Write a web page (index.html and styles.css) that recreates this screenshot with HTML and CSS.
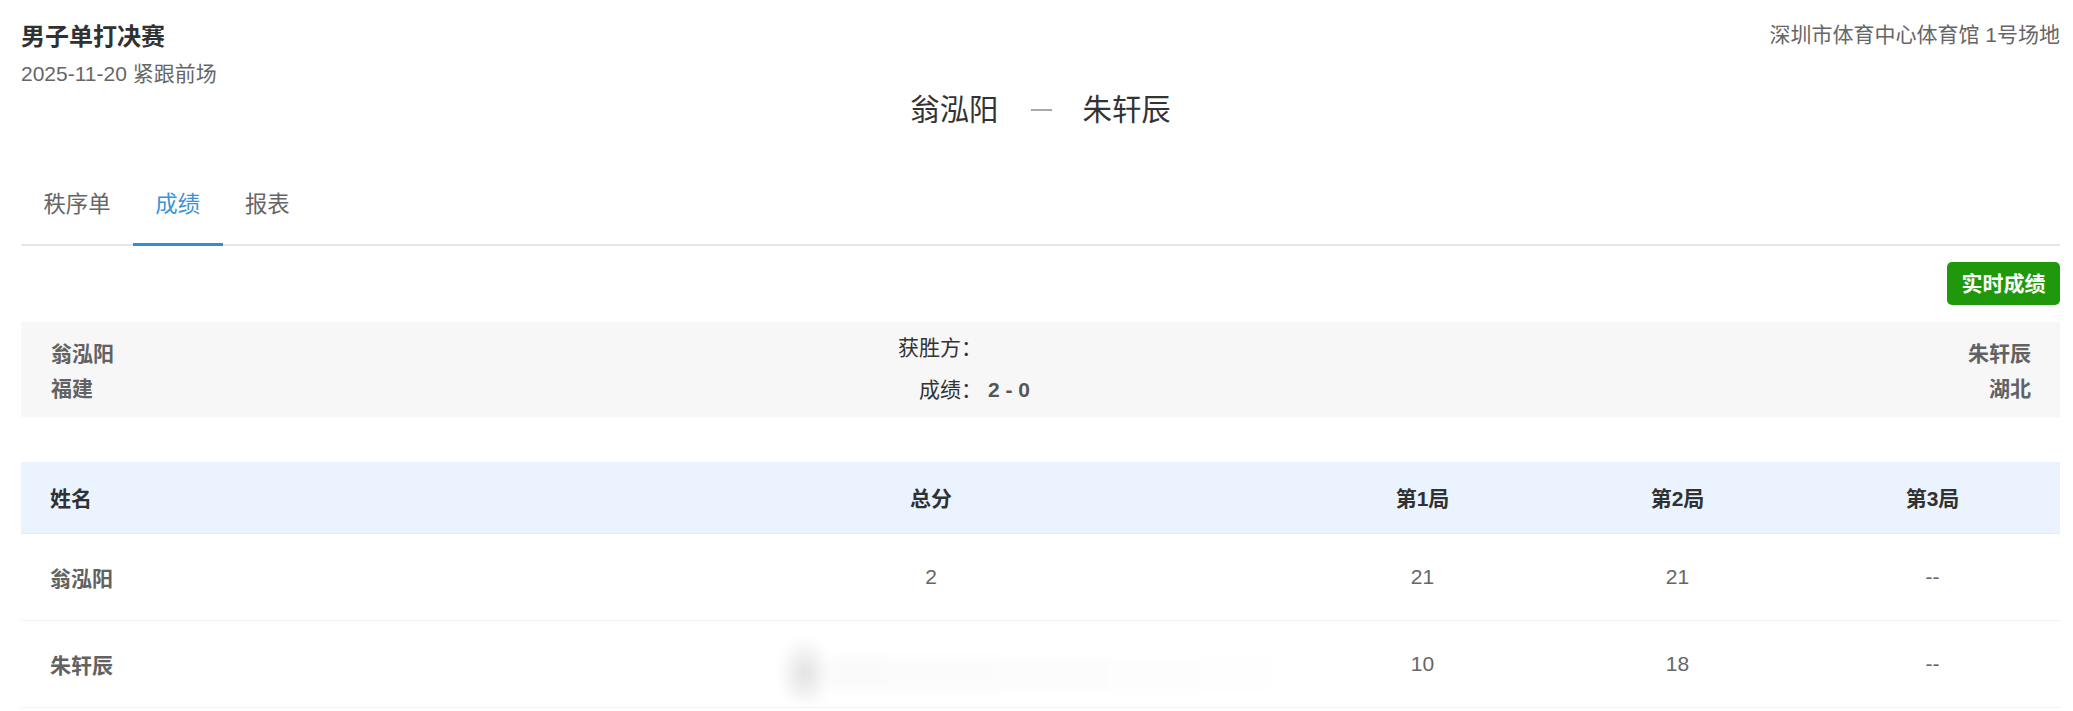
FILE: index.html
```html
<!DOCTYPE html>
<html lang="zh-CN">
<head>
<meta charset="utf-8">
<title>男子单打决赛 - 成绩</title>
<link rel="stylesheet" href="styles.css">
</head>
<body>
<div class="page">
  <header class="top">
    <div class="event">
      <h1 class="event-title">男子单打决赛</h1>
      <div class="event-meta">2025-11-20 紧跟前场</div>
    </div>
    <div class="venue">深圳市体育中心体育馆 1号场地</div>
  </header>

  <div class="matchup">
    <span class="player">翁泓阳</span><span class="vs"></span><span class="player">朱轩辰</span>
  </div>

  <nav class="tabs">
    <a class="tab">秩序单</a>
    <a class="tab active">成绩</a>
    <a class="tab">报表</a>
  </nav>

  <div class="toolbar">
    <button class="live-btn" type="button">实时成绩</button>
  </div>

  <section class="summary">
    <div class="side">
      <div>翁泓阳</div>
      <div>福建</div>
    </div>
    <div class="result">
      <div class="result-row"><span class="label">获胜方：</span><span class="value"></span></div>
      <div class="result-row"><span class="label">成绩：</span><span class="value strong">2 - 0</span></div>
    </div>
    <div class="side side-right">
      <div>朱轩辰</div>
      <div>湖北</div>
    </div>
  </section>

  <table class="scores">
    <colgroup>
      <col class="c-name"><col class="c-total"><col class="c-set"><col class="c-set"><col class="c-set">
    </colgroup>
    <thead>
      <tr>
        <th class="name">姓名</th>
        <th>总分</th>
        <th>第1局</th>
        <th>第2局</th>
        <th>第3局</th>
      </tr>
    </thead>
    <tbody>
      <tr>
        <td class="name">翁泓阳</td>
        <td>2</td>
        <td>21</td>
        <td>21</td>
        <td>--</td>
      </tr>
      <tr>
        <td class="name">朱轩辰</td>
        <td class="smeared"><div class="smear"><span class="blob"></span><span class="streak"></span></div></td>
        <td>10</td>
        <td>18</td>
        <td>--</td>
      </tr>
    </tbody>
  </table>
</div>
</body>
</html>
```

FILE: styles.css
```css
* { box-sizing: border-box; }

html, body {
  margin: 0;
  padding: 0;
  background: #ffffff;
}

body {
  font-family: "Liberation Sans", Arial, "Noto Sans CJK SC", sans-serif;
  color: #333333;
}

.page {
  padding: 20px 13px 0 21px;
}

/* ---------- header ---------- */
.top {
  display: flex;
  justify-content: space-between;
  align-items: flex-start;
}

.event-title {
  margin: 0;
  font-size: 24px;
  line-height: 34px;
  font-weight: 700;
  color: #303133;
}

.event-meta {
  margin-top: 5px;
  font-size: 21px;
  line-height: 30px;
  color: #666666;
}

.venue {
  font-size: 21px;
  line-height: 30px;
  color: #666666;
}

.matchup {
  margin-top: 1px;
  display: flex;
  justify-content: center;
  align-items: center;
  font-size: 29.4px;
  line-height: 40px;
  color: #333333;
}

.vs {
  display: inline-block;
  width: 21px;
  height: 2px;
  margin: 0 31px 0 32px;
  background: #a8a8a8;
}

/* ---------- tabs ---------- */
.tabs {
  margin-top: 53px;
  display: flex;
  border-bottom: 2px solid #e4e7ed;
}

.tab {
  padding: 0 22.4px 16px;
  font-size: 22.4px;
  line-height: 44px;
  color: #666666;
  border-bottom: 3px solid transparent;
  margin-bottom: -2px;
  cursor: pointer;
}

.tab.active {
  color: #3a93da;
  border-bottom-color: #2f8ed8;
}

/* ---------- toolbar ---------- */
.toolbar {
  margin-top: 16px;
  display: flex;
  justify-content: flex-end;
}

.live-btn {
  height: 43px;
  padding: 0 14.5px;
  border: none;
  border-radius: 5px;
  background: #1f990b;
  color: #ffffff;
  font-family: inherit;
  font-size: 21px;
  font-weight: 700;
  line-height: 43px;
}

/* ---------- summary ---------- */
.summary {
  margin-top: 17px;
  height: 95px;
  padding: 8px 29px 0 30px;
  background: #f7f7f7;
  display: grid;
  grid-template-columns: 847px auto 1fr;
  align-items: start;
}

.side {
  padding-top: 6px;
  font-size: 21px;
  line-height: 35px;
  font-weight: 700;
  color: #626262;
}

.side-right {
  text-align: right;
}

.result {
  display: flex;
  flex-direction: column;
  gap: 7px;
  font-size: 21px;
  line-height: 35px;
}

.result-row {
  display: flex;
}

.label {
  width: 84px;
  text-align: right;
  color: #333333;
}

.value {
  margin-left: 6px;
}

.value.strong {
  font-weight: 700;
  color: #555555;
}

/* ---------- score table ---------- */
.scores {
  margin-top: 45px;
  width: 100%;
  table-layout: fixed;
  border-collapse: collapse;
  font-size: 21px;
}

.c-name { width: 546px; }
.c-total { width: 728px; }
.c-set { width: 255px; }

.scores th {
  height: 71px;
  padding: 0;
  background: #ebf4fe;
  color: #303133;
  font-weight: 700;
  text-align: center;
  border-bottom: 1px solid #e3edf8;
}

.scores td {
  height: 87px;
  padding: 0;
  text-align: center;
  color: #666666;
  border-bottom: 1px solid #f1f2f4;
}

.scores th.name,
.scores td.name {
  text-align: left;
  padding-left: 29px;
}

.scores td.name {
  font-weight: 700;
  color: #626262;
}

.scores td.smeared {
  text-align: left;
}

.smear {
  display: flex;
  align-items: center;
  height: 86px;
  margin-left: 211px;
}

.blob {
  flex: none;
  width: 54px;
  height: 76px;
  background: radial-gradient(ellipse 50% 50% at 50% 62%, rgba(0, 0, 0, 0.12), rgba(0, 0, 0, 0.02) 80%, rgba(0, 0, 0, 0) 100%);
  filter: blur(5px);
}

.streak {
  flex: none;
  align-self: flex-end;
  margin-bottom: 16px;
  width: 473px;
  height: 33px;
  background: linear-gradient(to right, rgba(0, 0, 0, 0.02), rgba(0, 0, 0, 0.008) 70%, rgba(0, 0, 0, 0));
  filter: blur(5px);
}
```
